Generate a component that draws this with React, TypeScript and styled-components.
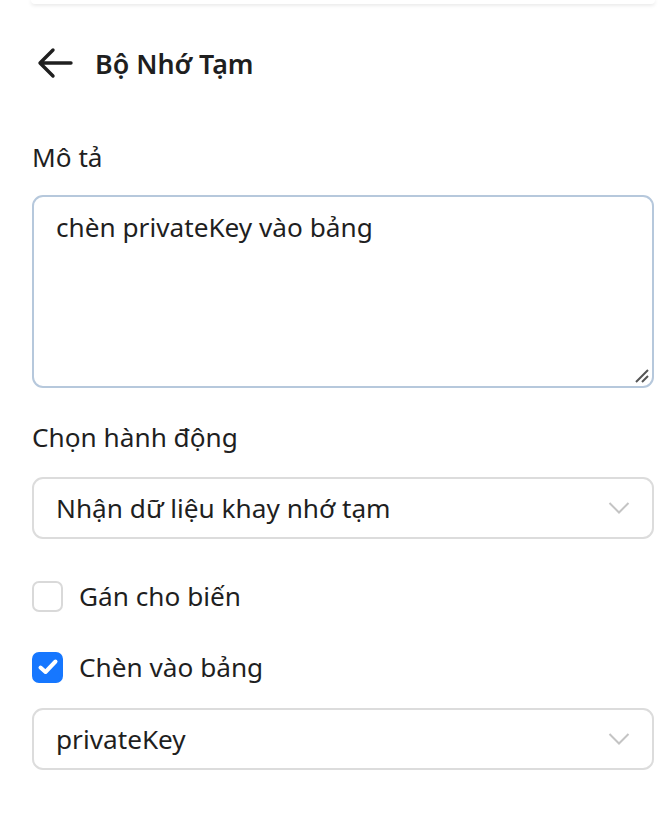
import React from "react"
import styled, { createGlobalStyle } from "styled-components"

const GlobalStyle = createGlobalStyle`
  html, body {
    margin: 0;
    padding: 0;
    background: #ffffff;
  }
  body {
    font-family: "Noto Sans", "Open Sans", "Liberation Sans", sans-serif;
    color: rgba(0, 0, 0, 0.88);
  }
`

const Page = styled.div`
  width: 664px;
  height: 818px;
  box-sizing: border-box;
  padding: 0 10px 0 32px;
  display: flex;
  flex-direction: column;
  overflow: hidden;
`

const TopCard = styled.div`
  height: 4px;
  margin: 0 -1px 0 -1px;
  background: #fff;
  border-radius: 0 0 6px 6px;
  box-shadow: 0 1px 4px rgba(0, 0, 0, 0.12);
`

const Header = styled.div`
  display: flex;
  align-items: center;
  gap: 22px;
  height: 40px;
  margin-top: 39px;
  padding-left: 5px;
`

const Title = styled.h1`
  margin: 0;
  font-size: 26.8px;
  font-weight: 600;
  color: #1f1f1f;
`

const Label = styled.div<{ $top: number }>`
  margin-top: ${(p) => p.$top}px;
  font-size: 26.2px;
  line-height: 36px;
  color: #1f1f1f;
`

const TextArea = styled.div`
  position: relative;
  margin-top: 20px;
  height: 193px;
  box-sizing: border-box;
  border: 2px solid #b6c8dc;
  border-radius: 11px;
  padding: 12px 22px;
  font-size: 26.2px;
  line-height: 36px;
  color: #1f1f1f;
`

const ResizeGrip = styled.svg`
  position: absolute;
  right: 2px;
  bottom: 2px;
`

const Select = styled.div<{ $top: number }>`
  margin-top: ${(p) => p.$top}px;
  height: 62px;
  box-sizing: border-box;
  border: 2px solid #dcdcdc;
  border-radius: 11px;
  padding: 0 22px;
  display: flex;
  align-items: center;
  justify-content: space-between;
  font-size: 26.2px;
  color: #1f1f1f;
`

const CheckRow = styled.label<{ $top: number }>`
  margin-top: ${(p) => p.$top}px;
  display: flex;
  align-items: center;
  gap: 16px;
  height: 32px;
  font-size: 26.2px;
  color: #1f1f1f;
`

const Box = styled.span<{ $checked?: boolean }>`
  width: 31px;
  height: 31px;
  box-sizing: border-box;
  border-radius: 7px;
  border: 2px solid ${(p) => (p.$checked ? "#1677ff" : "#d9d9d9")};
  background: ${(p) => (p.$checked ? "#1677ff" : "#fff")};
  display: flex;
  align-items: center;
  justify-content: center;
`

const Chevron = () => (
  <svg width="22" height="14" viewBox="0 0 22 14">
    <path d="M1.5 2 L11 11.5 L20.5 2" fill="none" stroke="#c4c4c4" strokeWidth="2" />
  </svg>
)

export default function App() {
  return (
    <>
      <GlobalStyle />
      <Page>
        <TopCard />
        <Header>
          <svg width="36" height="32" viewBox="0 0 36 32">
            <path
              d="M34 16 H4 M16 3 L3 16 L16 29"
              fill="none"
              stroke="#1f1f1f"
              strokeWidth="3.4"
              strokeLinecap="round"
              strokeLinejoin="round"
            />
          </svg>
          <Title>Bộ Nhớ Tạm</Title>
        </Header>
        <Label $top={56}>Mô tả</Label>
        <TextArea>
          chèn privateKey vào bảng
          <ResizeGrip width="18" height="18" viewBox="0 0 18 18">
            <path d="M4 16 L16 4 M10 16 L16 10" stroke="#555" strokeWidth="2" />
          </ResizeGrip>
        </TextArea>
        <Label $top={31}>Chọn hành động</Label>
        <Select $top={22}>
          <span>Nhận dữ liệu khay nhớ tạm</span>
          <Chevron />
        </Select>
        <CheckRow $top={41}>
          <Box />
          Gán cho biến
        </CheckRow>
        <CheckRow $top={39}>
          <Box $checked>
            <svg width="22" height="18" viewBox="0 0 22 18">
              <path
                d="M3.5 9.5 L8.5 14 L18.5 3.5"
                fill="none"
                stroke="#fff"
                strokeWidth="4"
                strokeLinecap="round"
                strokeLinejoin="round"
              />
            </svg>
          </Box>
          Chèn vào bảng
        </CheckRow>
        <Select $top={25}>
          <span>privateKey</span>
          <Chevron />
        </Select>
      </Page>
    </>
  )
}
